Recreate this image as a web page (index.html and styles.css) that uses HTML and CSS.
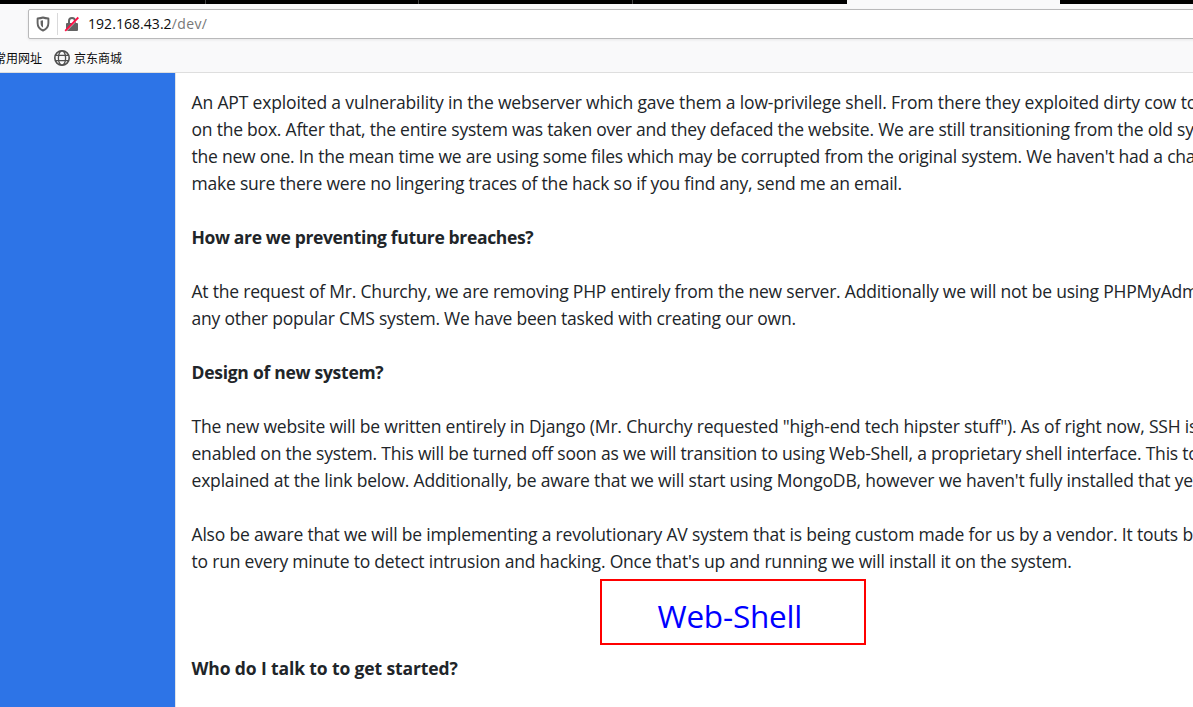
FILE: index.html
```html
<!DOCTYPE html>
<html lang="en">
<head>
<meta charset="utf-8">
<title>192.168.43.2/dev/</title>
<link rel="stylesheet" href="styles.css">
</head>
<body>
<div class="window">
  <div class="tabs">
    <span class="tab tab-first"></span><span class="tab"></span><span class="tab tab-third"></span><span class="tab tab-last"></span><span class="tab-active"></span><span class="tab-rest"></span>
  </div>
  <div class="toolbar">
    <div class="urlbar">
      <svg class="shield" width="14" height="16" viewBox="0 0 14 16"><path d="M7 1.500C5.200 2.200 3.300 2.400 1.600 2.500V7c0 3.800 2.300 6.400 5.400 7.500 3.100-1.100 5.400-3.700 5.400-7.500V2.500C10.700 2.400 8.800 2.200 7 1.500z" fill="none" stroke="#636363" stroke-width="1.900" stroke-linejoin="round"/><path d="M7 4.300v7.200C5.300 10.500 4.600 9 4.600 7V4.800C5.500 4.700 6.300 4.500 7 4.300z" fill="#636363"/></svg>
      <span class="divider"></span>
      <svg class="lock" width="16" height="16" viewBox="0 0 16 16"><path d="M5 8V5a3 3 0 0 1 6 0v3" fill="none" stroke="#636363" stroke-width="2"/><rect x="2" y="7" width="12" height="8" rx="1" fill="#636363"/><path d="M2.200 15.200L15 2.200" stroke="#fff" stroke-width="1"/><path d="M1.200 14.800L14.300 1.500" stroke="#ff0f45" stroke-width="1.800"/></svg>
      <span class="address"><span class="host">192.168.43.2</span><span class="path">/dev/</span></span>
    </div>
  </div>
  <div class="bookmarks">
    <span class="mark mark-cut">常用网址</span>
    <svg class="globe" width="16" height="16" viewBox="0 0 16 16" fill="none" stroke="#505050" stroke-width="1.300"><circle cx="8" cy="8" r="7.200" stroke-width="1.600"/><ellipse cx="8" cy="8" rx="3.600" ry="7.200"/><path d="M1.500 5.300h13M1.500 10.700h13"/></svg>
    <span class="mark">京东商城</span>
  </div>
  <div class="page">
    <div class="side"></div>
    <div class="content">
      <p><span class="l1">An APT exploited a vulnerability in the webserver which gave them a low-privilege shell. From there they exploited dirty cow to</span><br><span class="l2">on the box. After that, the entire system was taken over and they defaced the website. We are still transitioning from the old sys</span><br><span class="l3">the new one. In the mean time we are using some files which may be corrupted from the original system. We haven't had a chan</span><br><span class="l4">make sure there were no lingering traces of the hack so if you find any, send me an email.</span></p>
      <h2 class="h1">How are we preventing future breaches?</h2>
      <p><span class="l5">At the request of Mr. Churchy, we are removing PHP entirely from the new server. Additionally we will not be using PHPMyAdm</span><br><span class="l6">any other popular CMS system. We have been tasked with creating our own.</span></p>
      <h2 class="h2">Design of new system?</h2>
      <p><span class="l7">The new website will be written entirely in Django (Mr. Churchy requested "high-end tech hipster stuff"). As of right now, SSH is</span><br><span class="l8">enabled on the system. This will be turned off soon as we will transition to using Web-Shell, a proprietary shell interface. This too</span><br><span class="l9">explained at the link below. Additionally, be aware that we will start using MongoDB, however we haven't fully installed that yet.</span></p>
      <p class="last"><span class="l10">Also be aware that we will be implementing a revolutionary AV system that is being custom made for us by a vendor. It touts be</span><br><span class="l11">to run every minute to detect intrusion and hacking. Once that's up and running we will install it on the system.</span></p>
      <div class="link-box"><a class="shell-link">Web-Shell</a></div>
      <h2 class="h3">Who do I talk to to get started?</h2>
    </div>
  </div>
</div>
</body>
</html>
```
FILE: styles.css
```css
* { box-sizing: border-box; }
body { margin: 0; background: #fff; overflow: hidden; }
.window { width: 1193px; height: 707px; overflow: hidden; display: flex; flex-direction: column; font-family: "Open Sans", "Noto Sans", sans-serif; }
.tabs { display: flex; height: 4px; flex: none; background: #f9f9fa; }
.tab { width: 213px; background: #000; border-right: 1px solid #444; }
.tab-first { width: 206px; }
.tab-third { width: 214px; }
.tab-last { border-right: 0; width: 214px; }
.tab-active { width: 213px; }
.tab-rest { flex: 1; background: #000; }
.toolbar { flex: none; height: 40px; padding: 5px 0 0 28px; background: #f9f9fa; }
.urlbar { display: flex; align-items: center; height: 30px; width: 1200px; padding-left: 7px; background: #fff; border: 1px solid #b9b9ba; border-radius: 2px; box-shadow: 0 1px 3px rgba(0, 0, 0, .08); }
.divider { width: 1px; height: 22px; margin: 0 6px 0 7px; background: #d9d9da; }
.address { margin-left: 8px; font-size: 14px; line-height: 20px; letter-spacing: .05px; color: #777; white-space: nowrap; }
.host { color: #0c0c0d; }
.path { letter-spacing: .4px; }
.bookmarks { flex: none; display: flex; align-items: center; height: 29px; background: #f9f9fa; border-bottom: 1px solid #dedede; }
.mark { font: 12px/16px "Noto Sans CJK SC", sans-serif; color: #0c0c0d; white-space: nowrap; }
.mark-cut { margin-left: -6px; }
.globe { margin: 0 4px 0 12px; }
.page { flex: 1; display: flex; min-height: 0; }
.side { flex: none; width: 176px; background: #2d74e7; border-right: 1px solid #dfe3e8; }
.content { flex: none; width: 1017px; padding: 16px 0 0 15.500px; font-size: 17.500px; line-height: 27px; color: #212529; white-space: nowrap; overflow: hidden; }
.content p { margin: 0 0 27px; }
.content h2 { margin: 0 0 27px; font-size: 17.500px; line-height: 27px; font-weight: 700; }
.content p.last { margin-bottom: 4px; }
.link-box { width: 266px; height: 66px; margin: 0 0 10px 408.500px; padding-left: 55.500px; border: 2px solid #f00; line-height: 69px; }
.shell-link { font-size: 31.500px; letter-spacing: -.2px; color: #00f; }

/* tracking per line of copy */
.l1 { letter-spacing: -.155px; }
.l2 { letter-spacing: -.22px; }
.l3 { letter-spacing: -.235px; }
.l4 { letter-spacing: -.215px; }
.l5 { letter-spacing: -.205px; }
.l6 { letter-spacing: -.215px; }
.l7 { letter-spacing: -.185px; }
.l8 { letter-spacing: -.205px; }
.l9 { letter-spacing: -.185px; }
.l10 { letter-spacing: -.185px; }
.l11 { letter-spacing: -.195px; }
.content .h1 { letter-spacing: -.35px; }
.content .h2 { letter-spacing: -.27px; }
.content .h3 { letter-spacing: -.12px; }
```
